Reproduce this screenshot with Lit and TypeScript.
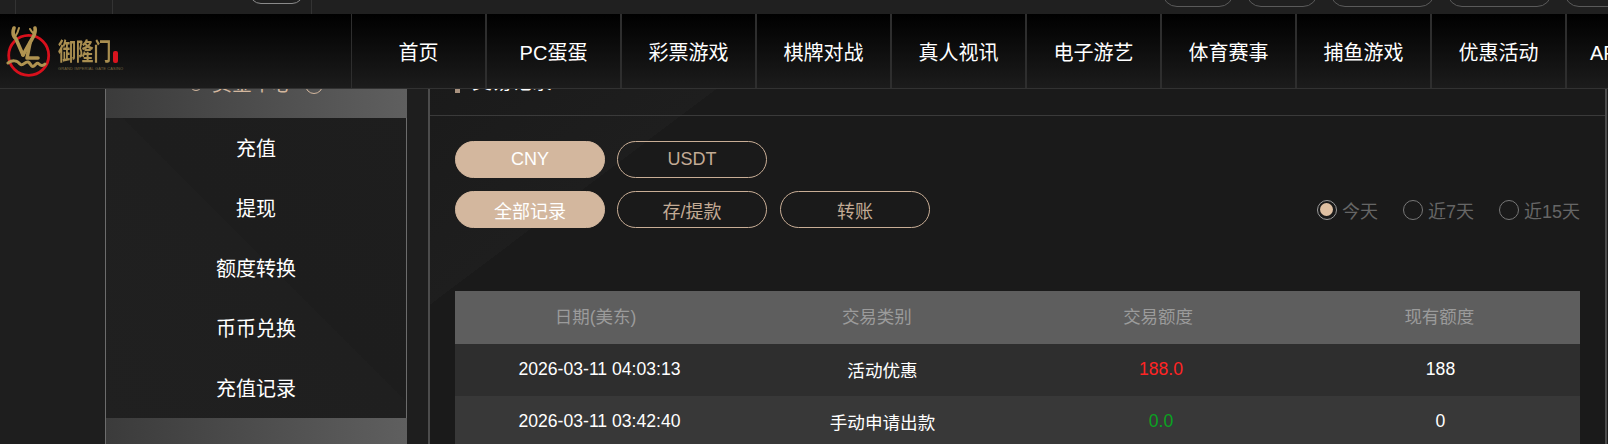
import { LitElement, html, css } from "lit";
import { customElement } from "lit/decorators.js";

const NAV = ["首页", "PC蛋蛋", "彩票游戏", "棋牌对战", "真人视讯", "电子游艺", "体育赛事", "捕鱼游戏", "优惠活动", "APP 下载"];
const SIDE = ["充值", "提现", "额度转换", "币币兑换", "充值记录"];
const TOP_PILLS = [72, 72, 105, 105, 90];
const HEAD = ["日期(美东)", "交易类别", "交易额度", "现有额度"];
const ROWS = [
  { date: "2026-03-11 04:03:13", type: "活动优惠", amt: "188.0", cls: "red", bal: "188" },
  { date: "2026-03-11 03:42:40", type: "手动申请出款", amt: "0.0", cls: "green", bal: "0" },
];

@customElement("app-root")
export class AppRoot extends LitElement {
  static styles = css`
    :host {
      display: block;
      width: 1608px;
      height: 444px;
      overflow: hidden;
      position: relative;
      background: #1d1d1d;
      color: #fff;
      font-family: "Liberation Sans", "Noto Sans CJK SC", sans-serif;
    }
    .strip {
      height: 14px;
      background: #202020;
      display: flex;
      overflow: hidden;
      position: relative;
      z-index: 3;
    }
    .cell { flex: none; height: 14px; border-right: 1px solid #333; box-sizing: border-box; }
    .c1 { width: 16px; }
    .c2 { width: 97px; }
    .c3 { width: 199px; padding-left: 136px; }
    .lp { width: 55px; height: 24px; margin-top: -20.5px; box-sizing: border-box; border: 1px solid #8a8a8a; border-radius: 12px; }
    .right { display: flex; gap: 12px; margin-left: 850px; flex: none; }
    .rp { flex: none; height: 30px; margin-top: -23.5px; box-sizing: border-box; border: 1px solid #5a5a5a; border-radius: 15px; }

    nav {
      height: 74px;
      border-bottom: 1px solid #323232;
      background: linear-gradient(180deg, #000 0%, #1c1c1c 100%);
      display: flex;
      position: relative;
      z-index: 3;
    }
    .logo {
      flex: none;
      width: 352px;
      box-sizing: border-box;
      border-right: 1px solid #2e2e2e;
      padding-left: 6px;
      display: flex;
      align-items: flex-start;
    }
    .mark { flex: none; margin-top: 12px; filter: blur(0.3px); }
    .word { margin: 26px 0 0 2px; width: 64px; }
    .wrow { display: flex; height: 24px; }
    .wname {
      flex: none;
      width: 55px;
      font-size: 24px;
      line-height: 24px;
      font-weight: 700;
      color: #a98e50;
      white-space: nowrap;
      transform: scaleX(0.74);
      transform-origin: left center;
      filter: blur(0.3px);
    }
    .seal { flex: none; width: 5px; height: 12px; margin-top: 11px; background: #d8141e; border-radius: 2px; }
    .wsub { font-size: 4px; line-height: 5px; margin-top: 2px; color: #7a6a42; white-space: nowrap; letter-spacing: 0.12px; }
    .item {
      flex: none;
      width: 135px;
      box-sizing: border-box;
      border-right: 2px solid #2e2e2e;
      display: flex;
      align-items: center;
      justify-content: center;
      font-size: 20px;
      white-space: nowrap;
    }
    .item:last-child { padding-right: 2px; }

    .body {
      margin-top: -31px;
      padding-left: 105px;
      display: flex;
      gap: 21px;
      align-items: flex-start;
      height: 386px;
      background: #1e1e1e;
    }
    .side {
      flex: none;
      width: 302px;
      height: 386px;
      box-sizing: border-box;
      border-left: 1px solid #6c6c6c;
      border-right: 1px solid #6c6c6c;
      background: linear-gradient(45deg, #202020 0%, #1f1f1f 50%, #1d1d1d 50%, #1e1e1e 100%);
    }
    .sh {
      height: 60px;
      margin: 0 -1px 0 0;
      box-sizing: border-box;
      padding-bottom: 20px;
      background: linear-gradient(90deg, #3b3b3b, #5f5f5f);
      display: flex;
      align-items: flex-end;
      justify-content: center;
      color: #d3b79e;
      font-size: 20px;
      line-height: 28px;
    }
    .dot { width: 12px; height: 12px; box-sizing: border-box; border: 1.5px solid #d3b79e; border-radius: 50%; margin: 0 10px 7px 0; }
    .ring { width: 18px; height: 18px; box-sizing: border-box; border: 1px solid #d3b79e; border-radius: 50%; margin: 0 0 4px 13px; }
    .si {
      height: 60px;
      box-sizing: border-box;
      padding-bottom: 2px;
      display: flex;
      align-items: center;
      justify-content: center;
      font-size: 20px;
    }
    .sf { height: 26px; margin-right: -1px; background: linear-gradient(90deg, #3b3b3b, #5f5f5f); }

    .main {
      flex: none;
      width: 1179px;
      height: 386px;
      box-sizing: border-box;
      border-left: 2px solid #4c4c4c;
      border-right: 2px solid #4c4c4c;
      background: linear-gradient(143deg, #1a1a1a 0%, #1e1e1e 19.4%, #1a1a1a 19.4%, #1a1a1a 100%);
    }
    .title {
      height: 58px;
      box-sizing: border-box;
      border-bottom: 1px solid #3a3a3a;
      padding: 0 0 22px 25px;
      display: flex;
      align-items: flex-end;
      gap: 12px;
      font-size: 20px;
      line-height: 20px;
    }
    .bar { width: 5px; height: 20px; background: #a8917e; }
    .ttext { margin-bottom: 1px; }
    .content { padding: 25px 25px 0; }
    .brow { display: flex; align-items: center; gap: 12px; height: 37px; }
    .brow + .brow { margin-top: 13px; }
    .btn {
      flex: none;
      width: 150px;
      height: 37px;
      box-sizing: border-box;
      border-radius: 18.5px;
      border: 1px solid #c9ae96;
      color: #c3ab95;
      display: flex;
      align-items: center;
      justify-content: center;
      font-size: 18px;
    }
    .btn + .btn + .btn { margin-left: 1px; }
    .btn.on { background: #d3b79e; border-color: #d3b79e; color: #fff; }
    .radios { margin-left: auto; display: flex; gap: 25px; color: #666; font-size: 18px; }
    .radio { display: flex; align-items: center; gap: 5px; }
    .rc {
      width: 20px;
      height: 20px;
      box-sizing: border-box;
      border: 1.5px solid #777;
      border-radius: 50%;
      display: flex;
      align-items: center;
      justify-content: center;
    }
    .rc.on { border-color: #999; }
    .rc.on::after { content: ""; width: 13px; height: 13px; border-radius: 50%; background: #dfc0a2; }

    .table { margin-top: 63px; width: 1125px; font-size: 17.6px; }
    .tr {
      display: grid;
      grid-template-columns: 289px 277px 280px 279px;
      height: 52px;
      box-sizing: border-box;
      padding-bottom: 2px;
      align-items: center;
      text-align: center;
    }
    .tr.h {
      grid-template-columns: repeat(4, 1fr);
      height: 53px;
      padding-bottom: 4px;
      font-size: 17.5px;
      background: #5e5e5e;
      color: #9b9b9b;
    }
    .tr.a { background: #2e2e2e; }
    .tr.b { background: #383838; }
    .red { color: #ff2424; }
    .green { color: #0aa321; }
  `;

  render() {
    return html`
      <div class="strip">
        <div class="cell c1"></div>
        <div class="cell c2"></div>
        <div class="cell c3"><div class="lp"></div></div>
        <div class="right">
          ${TOP_PILLS.map((w) => html`<div class="rp" style="width:${w}px"></div>`)}
        </div>
      </div>
      <nav>
        <div class="logo">
          <svg class="mark" width="50" height="52" viewBox="0 0 50 52" fill="none" aria-hidden="true">
            <circle cx="22.7" cy="29.4" r="20" stroke="#d8101c" stroke-width="2.8"/>
            <g stroke="#b09350" stroke-linecap="round" stroke-linejoin="round">
              <path d="M8 2C6 7 7 10 10 13L17 29" stroke-width="3.6"/>
              <path d="M13 2C12 6 11 8 9.5 10" stroke-width="2"/>
              <path d="M29 2C30 7 28 10 26 13L17 29" stroke-width="3.6"/>
              <path d="M24 3C25 5 27 7 28 8" stroke-width="2"/>
              <path d="M24 17L21 32H32" stroke-width="3.6"/>
              <path d="M2 37C6 34 11 34 14 38C17 41 19 35 22 36C25 37 25 42 28 40C30 38 31 36 33 38C35 40 37 40 39 38" stroke-width="3"/>
            </g>
          </svg>
          <div class="word">
            <div class="wrow"><span class="wname">御隆门</span><span class="seal"></span></div>
            <div class="wsub">GRAND IMPERIAL GATE CASINO</div>
          </div>
        </div>
        ${NAV.map((n) => html`<div class="item">${n}</div>`)}
      </nav>
      <div class="body">
        <aside class="side">
          <div class="sh"><span class="dot"></span><span>资金中心</span><span class="ring"></span></div>
          ${SIDE.map((s) => html`<div class="si">${s}</div>`)}
          <div class="sf"></div>
        </aside>
        <section class="main">
          <div class="title"><span class="bar"></span><span class="ttext">交易记录</span></div>
          <div class="content">
            <div class="brow">
              <div class="btn on">CNY</div>
              <div class="btn">USDT</div>
            </div>
            <div class="brow">
              <div class="btn on">全部记录</div>
              <div class="btn">存/提款</div>
              <div class="btn">转账</div>
              <div class="radios">
                <div class="radio"><span class="rc on"></span>今天</div>
                <div class="radio"><span class="rc"></span>近7天</div>
                <div class="radio"><span class="rc"></span>近15天</div>
              </div>
            </div>
            <div class="table">
              <div class="tr h">${HEAD.map((h) => html`<div>${h}</div>`)}</div>
              ${ROWS.map(
                (r, i) => html`<div class="tr ${i ? "b" : "a"}">
                  <div>${r.date}</div>
                  <div>${r.type}</div>
                  <div class=${r.cls}>${r.amt}</div>
                  <div>${r.bal}</div>
                </div>`
              )}
            </div>
          </div>
        </section>
      </div>
    `;
  }
}
